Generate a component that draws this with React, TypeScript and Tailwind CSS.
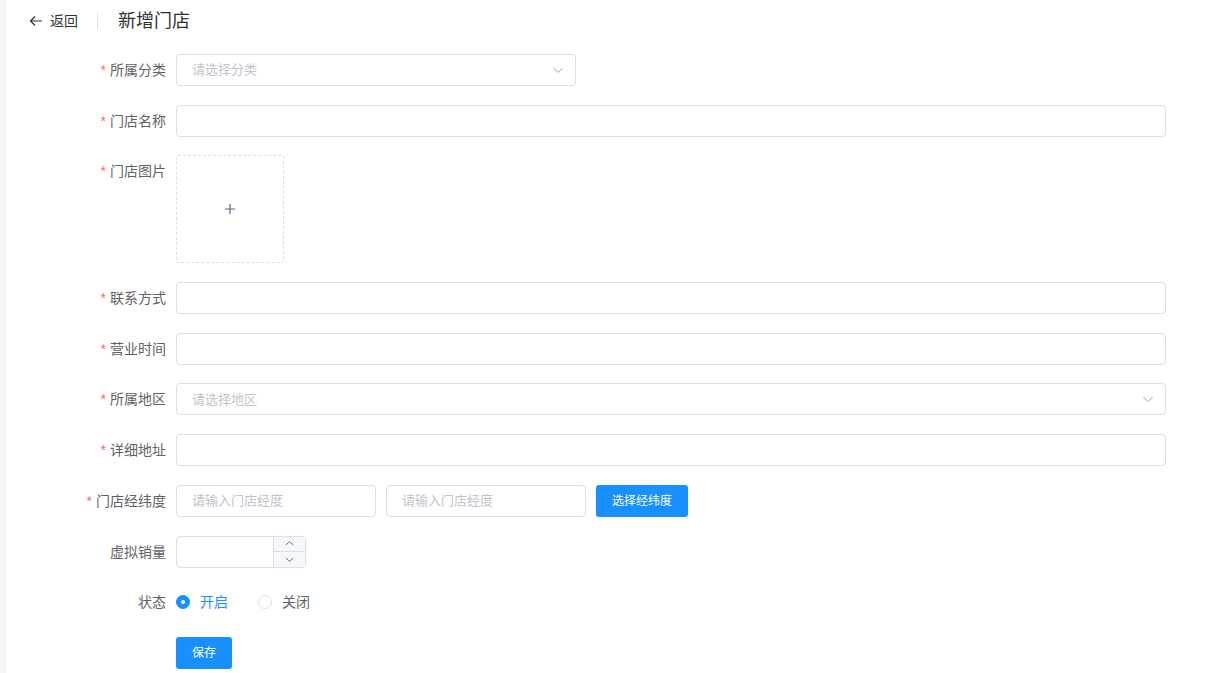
import React, { useState } from 'react';

const FONT = { fontFamily: '"Liberation Sans", "Noto Sans CJK SC", sans-serif' };

interface FieldProps {
  label: string;
  required?: boolean;
  align?: 'center' | 'start';
  children: React.ReactNode;
}

// One form row: right-aligned label + control
const Field: React.FC<FieldProps> = ({ label, required, align = 'center', children }) => (
  <div className={`flex mb-[18.7px] ${align === 'center' ? 'items-center h-[32px]' : 'items-start'}`}>
    <label
      className={`w-[170px] shrink-0 pr-[10px] text-right text-[14px] leading-[20px] text-[#606266] ${
        align === 'start' ? 'pt-[6px]' : ''
      }`}
    >
      {required && <span className="text-[#f56c6c] mr-[4px]">*</span>}
      {label}
    </label>
    {children}
  </div>
);

const Chevron = ({ dir = 'down', size = 12 }: { dir?: 'up' | 'down'; size?: number }) => (
  <svg width={size} height={size} viewBox="0 0 12 12" fill="none">
    <path
      d={dir === 'down' ? 'M2 4.5 L6 8 L10 4.5' : 'M2 7.5 L6 4 L10 7.5'}
      stroke="currentColor"
      strokeWidth="1"
    />
  </svg>
);

const TextInput = ({ placeholder, className = '' }: { placeholder?: string; className?: string }) => (
  <input
    placeholder={placeholder}
    className={`block h-[32px] border border-[#dcdfe6] rounded-[4px] px-[15px] text-[13px] text-[#606266] placeholder:text-[#c0c4cc] outline-none ${className}`}
  />
);

const SelectBox = ({ placeholder, className = '' }: { placeholder: string; className?: string }) => (
  <div
    className={`h-[32px] border border-[#dcdfe6] rounded-[4px] pl-[15px] pr-[10px] flex items-center justify-between text-[13px] text-[#c0c4cc] ${className}`}
  >
    <span>{placeholder}</span>
    <Chevron size={14} />
  </div>
);

const Radio = ({ checked, label, onClick, className = '' }: { checked: boolean; label: string; onClick: () => void; className?: string }) => (
  <button type="button" onClick={onClick} className={`flex items-center ${className}`}>
    <span
      className={`w-[14px] h-[14px] rounded-full flex items-center justify-center border ${
        checked ? 'bg-[#1890ff] border-[#1890ff]' : 'border-[#dcdfe6] bg-white'
      }`}
    >
      {checked && <span className="w-[4px] h-[4px] rounded-full bg-white" />}
    </span>
    <span className={`ml-[10px] ${checked ? 'text-[#1890ff]' : 'text-[#606266]'}`}>{label}</span>
  </button>
);

export default function App() {
  const [status, setStatus] = useState<'on' | 'off'>('on');

  return (
    <div className="flex min-h-[673px] bg-white" style={FONT}>
      <div className="w-[6px] shrink-0 bg-[#f3f5f8]" />
      <div className="flex-1">
        {/* Header */}
        <div className="h-[42px] flex items-center pl-[22px]">
          <div className="flex items-center text-[14px] text-[#303133]">
            <svg width="16" height="16" viewBox="0 0 16 16" fill="none" className="mr-[6px]">
              <path d="M14 8 H2.5 M7 3.5 L2.5 8 L7 12.5" stroke="#303133" strokeWidth="1.2" />
            </svg>
            返回
          </div>
          <div className="w-px h-[16px] bg-[#dcdfe6] ml-[19px] mr-[20px]" />
          <div className="text-[18px] text-[#303133]">新增门店</div>
        </div>

        <form className="mt-[12px]">
          <Field label="所属分类" required>
            <SelectBox placeholder="请选择分类" className="w-[400px]" />
          </Field>

          <Field label="门店名称" required>
            <TextInput className="w-[990px]" />
          </Field>

          <Field label="门店图片" required align="start">
            <div className="w-[108px] h-[108px] border border-dashed border-[#e0e0e0] rounded-[2px] flex items-center justify-center">
              <svg width="12" height="12" viewBox="0 0 12 12">
                <path d="M6 1 V11 M1 6 H11" stroke="#5a6a80" strokeWidth="1.2" />
              </svg>
            </div>
          </Field>

          <Field label="联系方式" required>
            <TextInput className="w-[990px]" />
          </Field>

          <Field label="营业时间" required>
            <TextInput className="w-[990px]" />
          </Field>

          <Field label="所属地区" required>
            <SelectBox placeholder="请选择地区" className="w-[990px]" />
          </Field>

          <Field label="详细地址" required>
            <TextInput className="w-[990px]" />
          </Field>

          <Field label="门店经纬度" required>
            <div className="flex items-center gap-[10px]">
              <TextInput placeholder="请输入门店经度" className="w-[200px]" />
              <TextInput placeholder="请输入门店经度" className="w-[200px]" />
              <button
                type="button"
                className="h-[32px] w-[92px] rounded-[3px] bg-[#1890ff] text-white text-[12px]"
              >
                选择经纬度
              </button>
            </div>
          </Field>

          <Field label="虚拟销量">
            <div className="w-[130px] h-[32px] border border-[#dcdfe6] rounded-[4px] flex overflow-hidden">
              <input className="flex-1 min-w-0 outline-none px-[10px] text-[13px]" />
              <div className="w-[32px] border-l border-[#dcdfe6] bg-[#f5f7fa] flex flex-col text-[#606266]">
                <div className="flex-1 flex items-center justify-center border-b border-[#dcdfe6]">
                  <Chevron dir="up" size={11} />
                </div>
                <div className="flex-1 flex items-center justify-center">
                  <Chevron size={11} />
                </div>
              </div>
            </div>
          </Field>

          <Field label="状态">
            <div className="flex items-center text-[14px]">
              <Radio checked={status === 'on'} label="开启" onClick={() => setStatus('on')} className="mr-[30px]" />
              <Radio checked={status === 'off'} label="关闭" onClick={() => setStatus('off')} />
            </div>
          </Field>

          <div className="pl-[170px]">
            <button type="button" className="h-[32px] w-[56px] rounded-[3px] bg-[#1890ff] text-white text-[12px]">
              保存
            </button>
          </div>
        </form>
      </div>
    </div>
  );
}
